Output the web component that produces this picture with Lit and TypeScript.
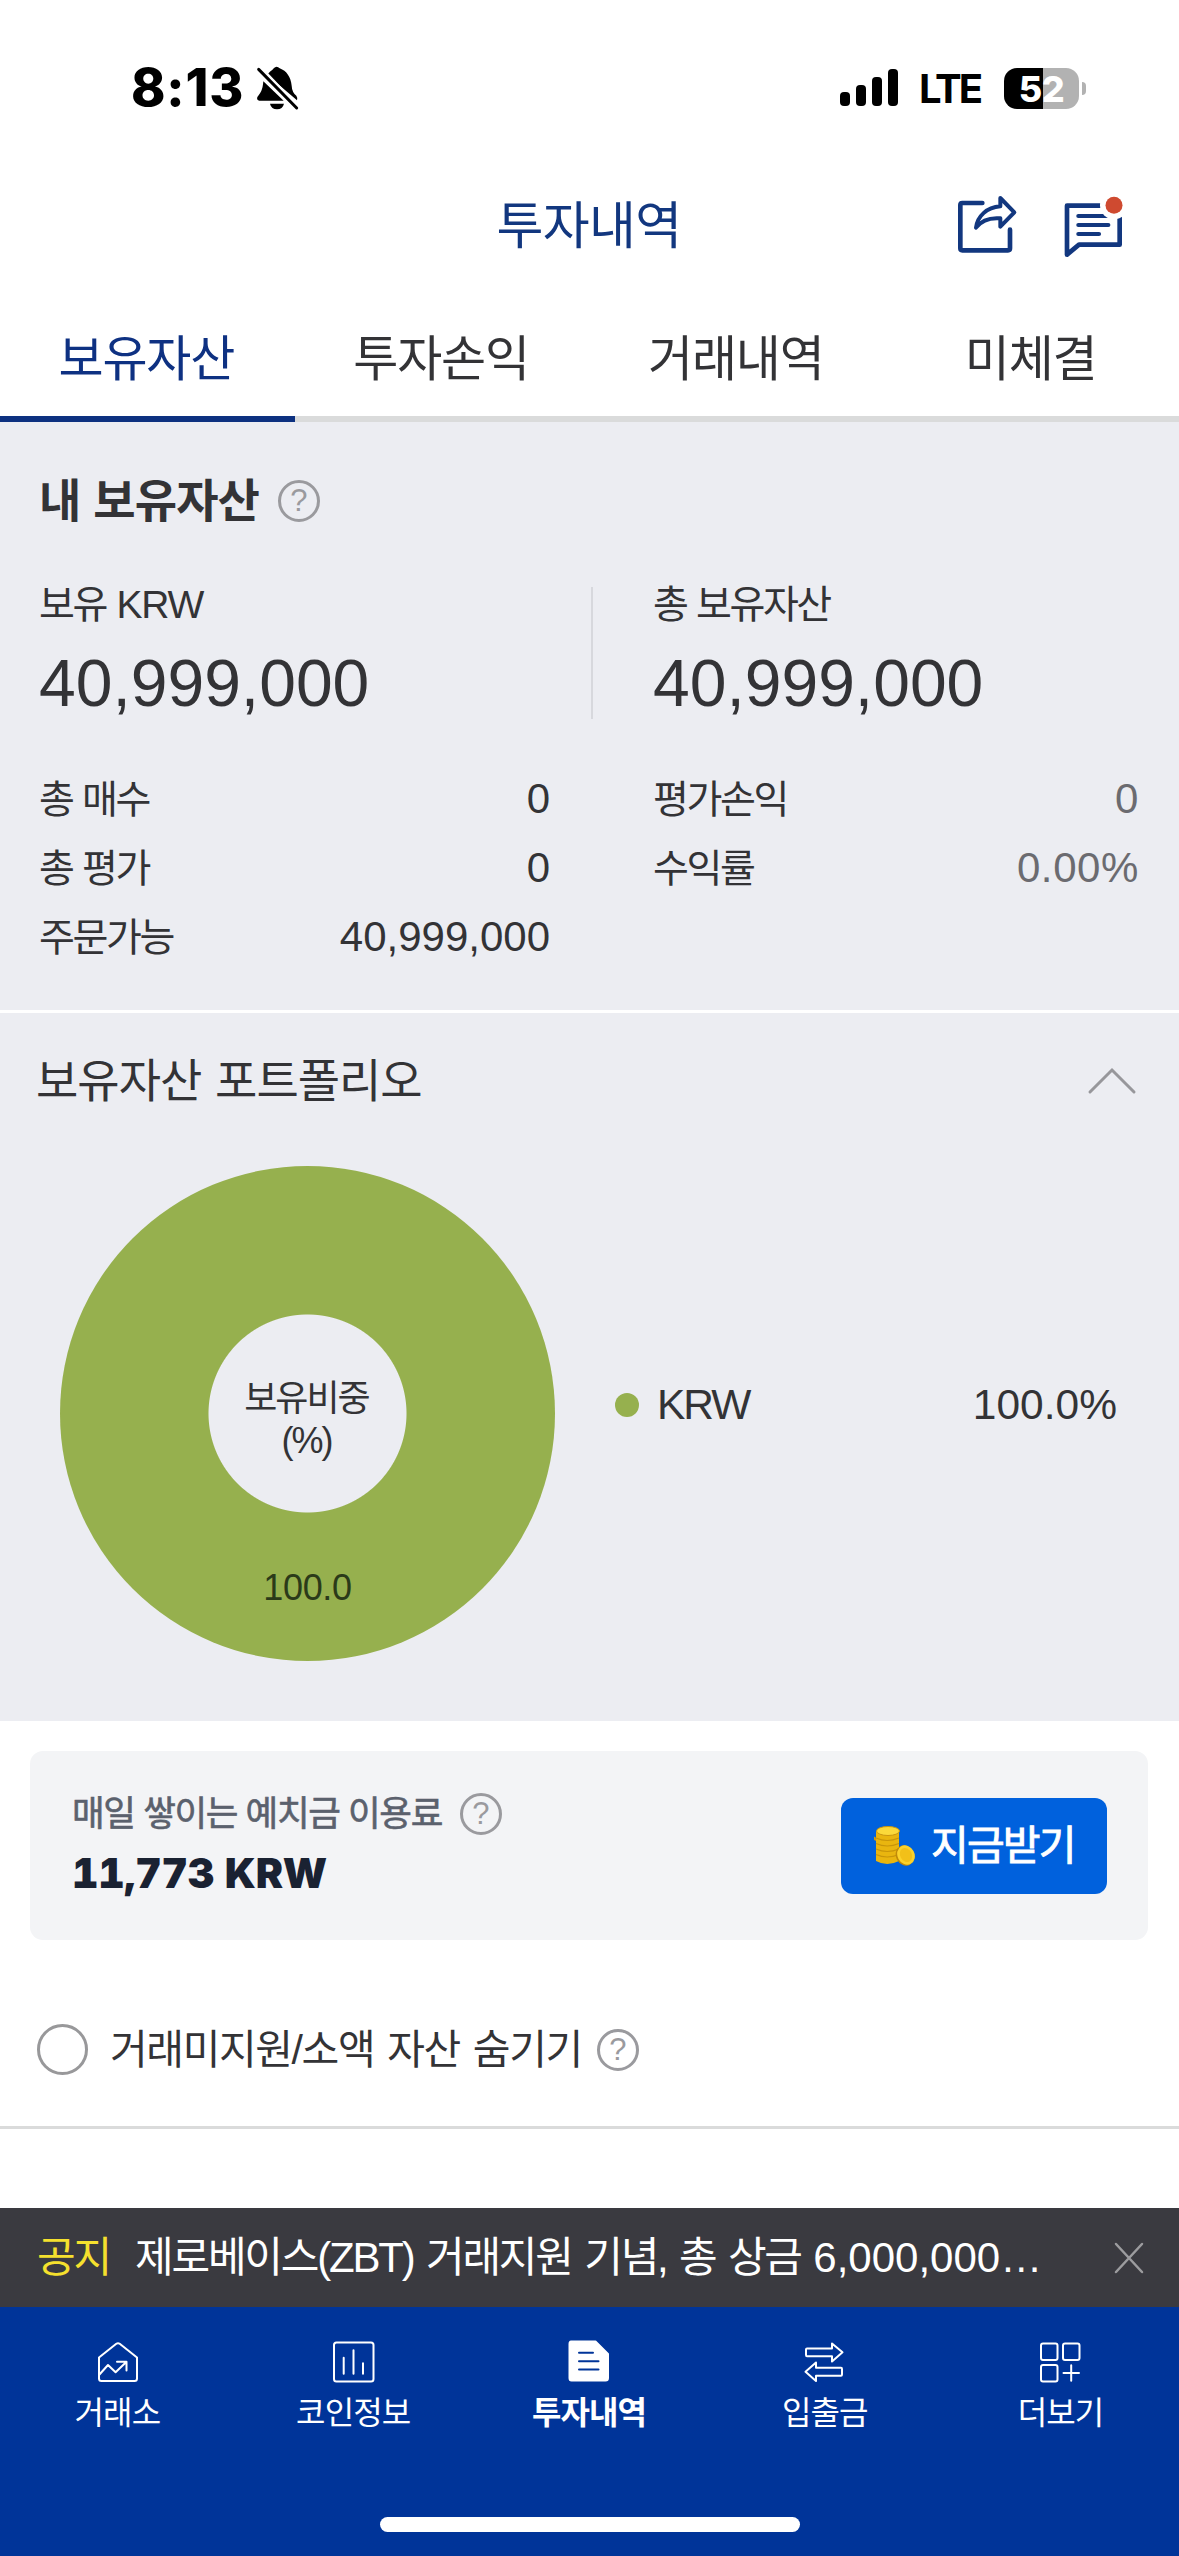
import { LitElement, html, css, svg, nothing } from "lit";
import { customElement, property } from "lit/decorators.js";
import { classMap } from "lit/directives/class-map.js";

const KR = css`"Liberation Sans", "Noto Sans CJK KR", sans-serif`;

@customElement("help-mark")
class HelpMark extends LitElement {
  static styles = css`
    :host {
      display: flex;
      align-items: center;
      justify-content: center;
      box-sizing: border-box;
      width: 42px;
      height: 42px;
      border: 3px solid #9a9a9e;
      border-radius: 50%;
      color: #9a9a9e;
      font: 31px/36px ${KR};
      letter-spacing: 0;
      -webkit-text-stroke: 0;
    }
  `;
  render() {
    return html`?`;
  }
}

@customElement("status-bar")
class StatusBar extends LitElement {
  static styles = css`
    :host {
      display: flex;
      align-items: center;
      height: 176px;
      padding: 0 93px 0 131px;
      font-family: Inter, "Liberation Sans", sans-serif;
      color: #000;
    }
    .time {
      font-size: 52px;
      font-weight: 800;
      line-height: 60px;
      letter-spacing: 0.8px;
      width: 125px;
      white-space: nowrap;
    }
    .grow {
      flex: 1;
    }
    .lte {
      font-size: 40px;
      font-weight: 700;
      line-height: 50px;
      letter-spacing: -3px;
      width: 85px;
      margin-left: 19px;
      padding-top: 2px;
    }
    .battery {
      width: 75px;
      height: 41px;
      border-radius: 13px;
      background: linear-gradient(to right, #000 39px, #b2b2b2 39px);
      color: #fff;
      text-align: center;
      font-size: 36px;
      font-weight: 800;
      line-height: 42px;
      letter-spacing: -0.5px;
    }
    .tip {
      margin-left: 3px;
      width: 4px;
      height: 13px;
      border-radius: 0 7px 7px 0;
      background: #b2b2b2;
    }
    svg {
      display: block;
    }
  `;
  render() {
    return html`
      <span class="time">8:13</span>
      <svg width="44" height="46" viewBox="0 0 132 138">
        <path d="M34 30C42 18 50 16 53 10Q62 1 71 10C92 18 104 36 107 62Q108 82 121 92Q125 97 123 106Z" />
        <path d="M22 49L83 107H10Q1 106 4 96C14 84 20 76 22 49Z" />
        <path d="M42 116H84Q80 133 63 133T42 116Z" />
        <path d="M10 13L120 128" stroke="#fff" stroke-width="22" />
        <path d="M8 13L122 129" stroke="#000" stroke-width="9" stroke-linecap="round" />
      </svg>
      <span class="grow"></span>
      <svg width="60" height="40" viewBox="0 0 60 40">
        <rect x="0" y="24" width="10" height="14" rx="4" />
        <rect x="16" y="17" width="10" height="21" rx="4" />
        <rect x="32" y="9" width="10" height="29" rx="4" />
        <rect x="48" y="1" width="10" height="37" rx="4" />
      </svg>
      <span class="lte">LTE</span>
      <span class="battery">52</span>
      <span class="tip"></span>
    `;
  }
}

interface Row {
  label: string;
  value: string;
}

@customElement("asset-column")
class AssetColumn extends LitElement {
  @property() label = "";
  @property() unit = "";
  @property() total = "";
  @property({ attribute: false }) rows: Row[] = [];
  @property({ type: Boolean }) muted = false;

  static styles = css`
    :host {
      display: block;
      font-family: ${KR};
      color: #333336;
      white-space: nowrap;
    }
    .label {
      margin-left: -1px;
      padding-top: 2px;
      font-size: 39px;
      line-height: 40px;
      letter-spacing: -2.4px;
      word-spacing: 1px;
    }
    .unit {
      margin-left: 1px;
      letter-spacing: -1.2px;
    }
    .total {
      margin: 23px 0 46px -1px;
      font-size: 66px;
      line-height: 70px;
    }
    .row {
      display: flex;
      justify-content: space-between;
      align-items: center;
      height: 69px;
    }
    .value {
      padding-top: 1px;
      font-size: 42px;
      line-height: 50px;
    }
    .muted {
      color: #6b6b70;
      letter-spacing: 0.6px;
    }
  `;
  render() {
    return html`
      <div class="label">${this.label}${this.unit ? html` <span class="unit">${this.unit}</span>` : nothing}</div>
      <div class="total">${this.total}</div>
      ${this.rows.map(
        (r) => html`<div class="row">
          <span class="label">${r.label}</span>
          <span class=${classMap({ value: true, muted: this.muted })}>${r.value}</span>
        </div>`
      )}
    `;
  }
}

const navIcons = {
  exchange: svg`
    <path d="M3 17.5L20.3 3.8Q22 2.6 23.7 3.8L41 17.5V38.5Q41 41 38.5 41H5.500Q3 41 3 38.5Z" />
    <path d="M3 35L12 25L19.600 32.300L30.300 22M21 21.700H30.500V30.500" />`,
  coins: svg`
    <rect x="2" y="2.500" width="39.500" height="39" rx="2.500" />
    <path d="M11.700 17.700V33.700M21.500 10.300V33.700M31 23.300V33.700" />`,
  history: svg`
    <path d="M4 1.500H28.500L41 14V38Q41 40.500 38.500 40.500H4.500Q2.500 40.500 2.500 38V4Q2.500 1.500 4 1.500Z" fill="#fff" />
    <path d="M12 12.700H26M12 21.300H31.500M12 29.500H31.500" stroke="#003499" />`,
  transfer: svg`
    <path d="M4 8.500H29V3.500L39.500 12.300L29 21.500V16.200H4Q3 16.200 3 15V9.500Q3 8.500 4 8.500Z" />
    <path d="M38 27.800H13V22.500L2.500 31.800L13 41V35.800H38Q39 35.800 39 34.500V29Q39 27.800 38 27.800Z" />`,
  more: svg`
    <rect x="2" y="3.500" width="16.500" height="16.500" rx="2" />
    <rect x="24" y="3.500" width="16.500" height="16.500" rx="2" />
    <rect x="2" y="25" width="16.500" height="16.500" rx="2" />
    <path d="M24.500 33H40M32.200 25.300V40.800" />`,
};

@customElement("bottom-nav")
class BottomNav extends LitElement {
  static styles = css`
    :host {
      display: flex;
      position: relative;
      height: 249px;
      background: #003499;
      color: #fff;
      font-family: ${KR};
      letter-spacing: normal;
    }
    .item {
      flex: 1 1 0;
      display: flex;
      flex-direction: column;
      align-items: center;
      padding-top: 33px;
    }
    svg {
      display: block;
      width: 44px;
      height: 44px;
      fill: none;
      stroke: #fff;
      stroke-width: 2;
      stroke-linejoin: round;
      stroke-linecap: round;
    }
    .name {
      margin: 9px 1px 0 0;
      font-size: 32px;
      line-height: 40px;
      letter-spacing: -0.9px;
    }
    .current {
      font-weight: 700;
    }
    .home {
      position: absolute;
      left: 380px;
      bottom: 24px;
      width: 420px;
      height: 15px;
      border-radius: 8px;
      background: #fff;
    }
  `;
  private items = [
    { name: "거래소", icon: navIcons.exchange },
    { name: "코인정보", icon: navIcons.coins },
    { name: "투자내역", icon: navIcons.history, current: true },
    { name: "입출금", icon: navIcons.transfer },
    { name: "더보기", icon: navIcons.more },
  ];
  render() {
    return html`
      ${this.items.map(
        (i) => html`<div class="item">
          <svg viewBox="0 0 44 44">${i.icon}</svg>
          <span class=${classMap({ name: true, current: !!i.current })}>${i.name}</span>
        </div>`
      )}
      <div class="home"></div>
    `;
  }
}

@customElement("app-root")
class AppRoot extends LitElement {
  static styles = css`
    :host {
      display: flex;
      flex-direction: column;
      width: 1179px;
      height: 2556px;
      overflow: hidden;
      background: #fff;
      color: #333336;
      font-family: ${KR};
      line-height: 50px;
      white-space: nowrap;
    }
    svg {
      display: block;
    }
    .header {
      display: grid;
      grid-template-columns: 1fr auto 1fr;
      align-items: center;
      height: 98px;
      color: #12377f;
    }
    .title {
      grid-column: 2;
      padding: 4px 1px 0 0;
      font-size: 51px;
      line-height: 60px;
      letter-spacing: -0.7px;
    }
    .actions {
      display: flex;
      justify-content: flex-end;
      gap: 43px;
      padding-right: 54px;
    }
    .tabs {
      display: flex;
      height: 148px;
    }
    .tab {
      flex: 1 1 0;
      box-sizing: border-box;
      padding: 28px 2px 0 0;
      border-bottom: 6px solid #dadbdb;
      text-align: center;
      font-size: 49px;
      line-height: 114px;
      letter-spacing: -1.2px;
    }
    .active {
      color: #0e3182;
      border-color: #0d3180;
    }
    .assets {
      box-sizing: border-box;
      height: 588px;
      padding: 54px 40px 0;
      background: #ecedf2;
    }
    .heading {
      display: flex;
      align-items: center;
      height: 50px;
      margin-left: -1px;
      font-size: 46px;
      font-weight: 700;
      letter-spacing: -0.9px;
      word-spacing: 1px;
      gap: 19px;
      line-height: 50px;
    }
    .columns {
      display: grid;
      grid-template-columns: 510px 104px 485px;
      margin-top: 57px;
    }
    .divider {
      width: 2px;
      height: 132px;
      margin: 4px 0 0 41px;
      background: #d7d8dd;
    }
    .portfolio {
      margin-top: 3px;
      height: 708px;
      background: #ecedf2;
    }
    .bar {
      display: flex;
      align-items: center;
      justify-content: space-between;
      height: 136px;
      padding: 0 42px 0 36px;
      font-size: 46px;
      letter-spacing: -1px;
      word-spacing: 2px;
    }
    .chart {
      display: flex;
      align-items: center;
      padding: 17px 62px 0 60px;
    }
    .donut {
      display: grid;
      grid-template-rows: 195px 105px 195px;
      box-sizing: border-box;
      width: 495px;
      height: 495px;
      border-radius: 50%;
      background: radial-gradient(circle, #ecedf2 98.500px, #96b04e 99.500px);
      text-align: center;
      font-size: 36px;
    }
    .center {
      grid-row: 2;
      padding: 17px 2px 0 0;
      line-height: 42px;
      letter-spacing: -2px;
    }
    .share {
      grid-row: 3;
      padding-top: 101px;
      line-height: 42px;
      color: #2b3a19;
      letter-spacing: -0.3px;
    }
    .legend {
      flex: 1;
      display: flex;
      align-items: center;
      margin-top: -17px;
      margin-left: 60px;
      font-size: 42.500px;
      line-height: 50px;
    }
    .dot {
      width: 24px;
      height: 24px;
      border-radius: 50%;
      background: #96b04e;
      margin-right: 18px;
    }
    .tight {
      flex: 1;
      letter-spacing: -2px;
    }
    .card {
      display: flex;
      align-items: center;
      justify-content: space-between;
      box-sizing: border-box;
      height: 189px;
      margin: 30px 31px 0 30px;
      padding: 0 41px 0 42px;
      border-radius: 13px;
      background: #f3f4f6;
    }
    .balance {
      padding-bottom: 5px;
    }
    .interest {
      display: flex;
      align-items: center;
      gap: 18px;
      height: 44px;
      font-size: 35.500px;
      letter-spacing: -1.35px;
      color: #5b616d;
      -webkit-text-stroke: 0.6px #5b616d;
    }
    .amount {
      margin-top: 15px;
      font: 900 41px/44px Inter, "Liberation Sans", sans-serif;
      font-variant-numeric: tabular-nums;
      letter-spacing: -0.2px;
      color: #1a2232;
    }
    .claim {
      display: flex;
      align-items: center;
      box-sizing: border-box;
      width: 266px;
      height: 96px;
      padding-left: 33px;
      gap: 15px;
      border-radius: 12px;
      background: #0061dd;
      color: #fff;
      font-size: 41px;
      letter-spacing: -1.8px;
      -webkit-text-stroke: 0.9px #fff;
    }
    .filter {
      display: flex;
      align-items: center;
      height: 153px;
      margin-top: 33px;
      padding-left: 37px;
      border-bottom: 3px solid #dadbdb;
      font-size: 41px;
      letter-spacing: -1.4px;
      word-spacing: 3px;
    }
    .radio {
      box-sizing: border-box;
      width: 51px;
      height: 51px;
      border: 3px solid #98989a;
      border-radius: 50%;
      margin-right: 22px;
    }
    .filter help-mark {
      margin-left: 15px;
    }
    .space {
      flex: 1;
    }
    .notice {
      display: flex;
      align-items: center;
      height: 99px;
      padding: 0 34px 0 37px;
      background: #3a3a40;
      color: #fff;
      font-size: 42px;
      letter-spacing: -2.2px;
    }
    .tag {
      width: 98px;
      color: #f5e02e;
    }
    .message {
      flex: 1;
      word-spacing: 3px;
    }
    .digits {
      letter-spacing: 0;
    }
  `;

  render() {
    return html`
      <status-bar></status-bar>
      <div class="header">
        <span class="title">투자내역</span>
        <div class="actions">
          <svg width="64" height="64" viewBox="470 458 192 192" fill="none" stroke="#12377f" stroke-linecap="round" stroke-linejoin="round">
            <path stroke-width="14" d="M549 488H489Q483 488 483 494V624Q483 630 489 630H626Q632 630 632 624V568" />
            <path stroke-width="12" d="M603 473L645 516L603 559V534C568 531 545 542 530 562C534 528 562 501 603 498Z" />
          </svg>
          <svg width="62" height="64" viewBox="790 458 186 192" fill="none" stroke="#12377f" stroke-linecap="round" stroke-linejoin="round">
            <path stroke-width="14" d="M920 496H802V643L838 613H960V520" />
            <path stroke-width="12.500" d="M836 527H920M836 554H926M836 581H898" />
            <circle cx="943" cy="495" r="42" fill="#fff" stroke="none" />
            <circle cx="943" cy="495" r="25.500" fill="#cf4a30" stroke="none" />
          </svg>
        </div>
      </div>
      <div class="tabs">
        <span class="tab active">보유자산</span>
        <span class="tab">투자손익</span>
        <span class="tab">거래내역</span>
        <span class="tab">미체결</span>
      </div>

      <section class="assets">
        <div class="heading"><span>내 보유자산</span><help-mark></help-mark></div>
        <div class="columns">
          <asset-column
            label="보유"
            unit="KRW"
            total="40,999,000"
            .rows=${[
              { label: "총 매수", value: "0" },
              { label: "총 평가", value: "0" },
              { label: "주문가능", value: "40,999,000" },
            ]}
          ></asset-column>
          <div class="divider"></div>
          <asset-column
            label="총 보유자산"
            total="40,999,000"
            muted
            .rows=${[
              { label: "평가손익", value: "0" },
              { label: "수익률", value: "0.00%" },
            ]}
          ></asset-column>
        </div>
      </section>

      <section class="portfolio">
        <div class="bar">
          <span>보유자산 포트폴리오</span>
          <svg width="50" height="28" viewBox="0 0 50 28" fill="none" stroke="#97979b" stroke-width="3" stroke-linecap="round">
            <path d="M3 25L25 3L47 25" />
          </svg>
        </div>
        <div class="chart">
          <div class="donut">
            <div class="center">보유비중<br />(%)</div>
            <div class="share">100.0</div>
          </div>
          <div class="legend">
            <span class="dot"></span><span class="tight">KRW</span><span>100.0%</span>
          </div>
        </div>
      </section>

      <div class="card">
        <div class="balance">
          <div class="interest"><span>매일 쌓이는 예치금 이용료</span><help-mark></help-mark></div>
          <div class="amount">11,773 KRW</div>
        </div>
        <div class="claim">
          <svg width="42" height="42" viewBox="0 0 42 42">
            <path d="M2 6V36Q13 42 25 36V6Z" fill="#e9b50f" />
            <path d="M2 13Q13 18 25 13M2 18.500Q13 23.500 25 18.500M2 24Q13 29 25 24M2 29.500Q13 34.500 25 29.500" fill="none" stroke="#c8950a" stroke-width="1.200" />
            <path d="M1 12Q0 14 2 15" stroke="#d29c0a" fill="none" stroke-width="2" />
            <ellipse cx="14" cy="6" rx="11.500" ry="4.500" fill="#fbd93a" stroke="#c99510" />
            <ellipse cx="31" cy="30.500" rx="9" ry="10.500" transform="rotate(-28 31 30.500)" fill="#c08a0a" />
            <ellipse cx="32" cy="30" rx="8.500" ry="10" transform="rotate(-28 32 30)" fill="#fbd22c" />
            <ellipse cx="32" cy="30" rx="5.800" ry="7.300" transform="rotate(-28 32 30)" fill="#f2c019" />
          </svg>
          <span>지금받기</span>
        </div>
      </div>

      <div class="filter">
        <span class="radio"></span>
        <span>거래미지원/소액 자산 숨기기</span>
        <help-mark></help-mark>
      </div>
      <div class="space"></div>

      <div class="notice">
        <span class="tag">공지</span>
        <span class="message">제로베이스(ZBT) 거래지원 기념, 총 상금 <span class="digits">6,000,000…</span></span>
        <svg width="32" height="32" viewBox="0 0 32 32" fill="none" stroke="#9c9c9f" stroke-width="2.500" stroke-linecap="round">
          <path d="M3 2L29 30M29 2L3 30" />
        </svg>
      </div>
      <bottom-nav></bottom-nav>
    `;
  }
}
